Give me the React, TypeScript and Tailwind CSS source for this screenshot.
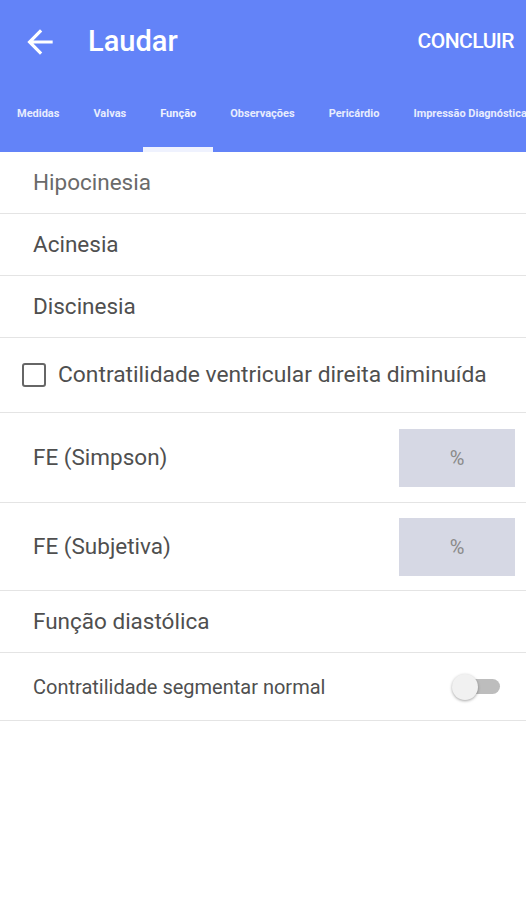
import React, { useState } from "react";

const tabs = ["Medidas", "Valvas", "Função", "Observações", "Pericárdio", "Impressão Diagnóstica"];

const BackArrow = () => (
    <svg width="38" height="38" viewBox="0 0 24 24" fill="white">
        <path d="M20 11H7.83l5.59-5.59L12 4l-8 8 8 8 1.41-1.41L7.83 13H20v-2z" />
    </svg>
);

const TextRow = ({ label, className }: { label: string, className?: string }) => (
    <div className={"flex items-center h-[62px] pl-[33px] border-b border-[#e4e4e4] text-[22.5px] " + (className || "text-[#4f4f4f]")}>
        {label}
    </div>
);

const PercentRow = ({ label, height }: { label: string, height: string }) => (
    <div className={"flex items-center justify-between pl-[33px] pr-[11px] border-b border-[#e4e4e4] " + height}>
        <span className="text-[22.5px] text-[#4f4f4f]">{label}</span>
        <div className="w-[116px] h-[58px] bg-[#d6d8e4] flex items-center justify-center text-[20px] text-[#8a8a8a]">%</div>
    </div>
);

const App = () => {
    const [active, setActive] = useState(2);
    const [checked, setChecked] = useState(false);
    const [on, setOn] = useState(false);

    return (
        <div className="w-[526px] h-[900px] bg-white overflow-hidden" style={{ fontFamily: 'Roboto, "Noto Sans", sans-serif' }}>
            <div className="bg-[#6383f8] h-[152px] flex flex-col">
                <div className="flex items-center h-[84px] pl-[21px] pr-[12px]">
                    <BackArrow />
                    <span className="ml-[29px] text-white text-[29px] font-medium">Laudar</span>
                    <span className="ml-auto text-white text-[21px] font-medium tracking-tight">CONCLUIR</span>
                </div>
                <div className="flex flex-1 whitespace-nowrap overflow-hidden">
                    {tabs.map((t, i) => (
                        <button
                            key={t}
                            onClick={() => setActive(i)}
                            className={"relative px-[17px] shrink-0 flex items-center text-[11px] font-bold text-white " + (i === active ? "opacity-90" : "opacity-85")}
                        >
                            <span className="-mt-[8px]">{t}</span>
                            {i === active && <span className="absolute left-0 right-0 bottom-0 h-[5px] bg-white" />}
                        </button>
                    ))}
                </div>
            </div>

            <TextRow label="Hipocinesia" className="text-[#6a6a6a]" />
            <TextRow label="Acinesia" />
            <TextRow label="Discinesia" />

            <div className="flex items-center h-[75px] pl-[22px] border-b border-[#e4e4e4] cursor-pointer" onClick={() => setChecked(!checked)}>
                <div className="w-[24px] h-[24px] border-2 border-[#666] rounded-[3px] flex items-center justify-center">
                    {checked && <div className="w-[12px] h-[12px] bg-[#6383f8]" />}
                </div>
                <span className="ml-[12px] text-[22.8px] text-[#4f4f4f]">Contratilidade ventricular direita diminuída</span>
            </div>

            <PercentRow label="FE (Simpson)" height="h-[90px]" />
            <PercentRow label="FE (Subjetiva)" height="h-[88px]" />

            <TextRow label="Função diastólica" />

            <div className="flex items-center justify-between h-[68px] pl-[33px] pr-[26px] border-b border-[#e4e4e4]">
                <span className="text-[20px] text-[#4f4f4f]">Contratilidade segmentar normal</span>
                <button onClick={() => setOn(!on)} className="relative w-[48px] h-[28px] flex items-center">
                    <span className="absolute right-0 w-[34px] h-[15px] rounded-full bg-[#bdbdbd]" />
                    <span className={"absolute w-[26px] h-[26px] rounded-full bg-[#f1f1f1] shadow-[0_1px_3px_rgba(0,0,0,0.35)] " + (on ? "right-0" : "left-0")} />
                </button>
            </div>
        </div>
    );
}

export default App;
